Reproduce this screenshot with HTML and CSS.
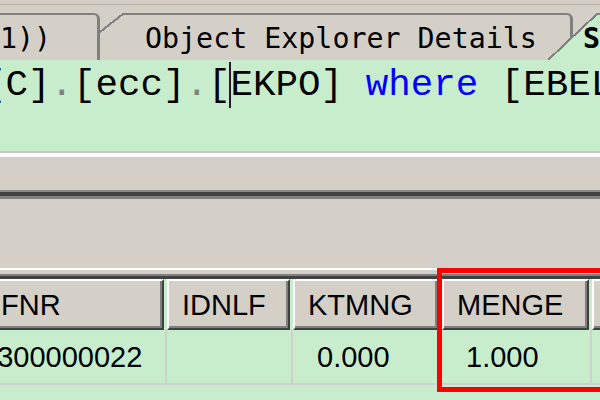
FILE: index.html
```html
<!DOCTYPE html>
<html lang="en">

<head>
    <meta charset="UTF-8">
    <meta name="viewport" content="width=device-width, initial-scale=1.0">
    <title>Query window</title>
    <link rel="stylesheet" href="styles.css">
</head>

<body>
    <div class="window">
        <div class="tabstrip">
            <div class="tab tab-prev">
                <span class="tab-label">d1))</span>
            </div>
            <div class="tab tab-oed">
                <svg class="slant" width="23" height="47" viewBox="0 0 23 47" shape-rendering="crispEdges">
                    <line x1="0" y1="19" x2="23" y2="1" stroke="#808080" stroke-width="2" />
                </svg>
                <div class="tab-body">
                    <span class="tab-label">Object Explorer Details</span>
                </div>
            </div>
            <div class="tab tab-active">
                <svg class="slant" width="49" height="47" viewBox="0 0 49 47" shape-rendering="crispEdges">
                    <polygon points="0,47 49,0 49,47" fill="#c7edcc" />
                    <line x1="0" y1="47" x2="49" y2="1" stroke="#808080" stroke-width="2" />
                </svg>
                <div class="tab-body">
                    <span class="tab-label">SQLQuery1.sql</span>
                </div>
            </div>
        </div>

        <div class="editor">
            <div class="code">[C]<span class="op">.</span>[ecc]<span class="op">.</span>[<span class="caret">EKPO]</span> <span class="kw">where</span> [EBELN] <span class="op">=</span> '4500000022'</div>
        </div>

        <div class="results">
            <div class="pane-top"></div>
            <div class="splitter"></div>
            <div class="pane-bottom"></div>
        </div>

        <div class="grid-frame">
            <div class="grid-wrap">
                <div class="grid">
                    <div class="th">INFNR</div>
                    <div class="th">IDNLF</div>
                    <div class="th">KTMNG</div>
                    <div class="th">MENGE</div>
                    <div class="th">NETPR</div>

                    <div class="td">5300000022</div>
                    <div class="td"></div>
                    <div class="td">0.000</div>
                    <div class="td">1.000</div>
                    <div class="td">0.00</div>
                </div>
            </div>
        </div>

        <div class="callout"></div>
    </div>
</body>

</html>
```

FILE: styles.css
```css
* {
    box-sizing: border-box;
}

html,
body {
    margin: 0;
}

body {
    width: 600px;
    height: 400px;
    overflow: hidden;
    background: #c7edcc;
    font-family: "Liberation Sans", Arial, sans-serif;
}

.window {
    position: relative;
    width: 600px;
    height: 400px;
    overflow: hidden;
    background: #c7edcc;
}

/* tab strip */
.tabstrip {
    display: flex;
    height: 60px;
    padding-top: 13px;
    overflow: hidden;
    white-space: nowrap;
    background: linear-gradient(#d4d0c8 4px, #b4b0a8 4px, #b4b0a8 5px, #d4d0c8 5px);
    font-family: "DejaVu Sans Mono", monospace;
    font-size: 28.3px;
    line-height: 33px;
    color: #000;
}

.tab {
    flex: none;
    display: flex;
    height: 47px;
}

.slant {
    flex: none;
    display: block;
}

.tab-prev {
    width: 100px;
    padding-top: 7px;
    overflow: hidden;
    border-top: 2px solid #808080;
    border-right: 3px solid #808080;
    border-top-right-radius: 6px;
}

.tab-prev .tab-label {
    margin-left: -17px;
}

.tab-body {
    padding-top: 7px;
    border-top: 2px solid #808080;
}

.tab-oed .tab-body {
    width: 450px;
    padding-left: 22px;
    border-right: 3px solid #808080;
    border-top-right-radius: 6px;
}

.tab-active {
    margin-left: -25px;
}

.tab-active .tab-body {
    width: 120px;
    background: #c7edcc;
    font-weight: bold;
}

.tab-active .tab-label {
    margin-left: -14px;
}

/* query editor */
.editor {
    height: 93px;
    background: #c7edcc;
    border-bottom: 2px solid #cac6be;
    overflow: hidden;
}

.code {
    margin-left: -17px;
    padding-top: 4px;
    font-family: "Liberation Mono", "Courier New", monospace;
    font-size: 37.5px;
    line-height: 42px;
    white-space: nowrap;
    color: #000;
}

.op {
    color: #808080;
}

.kw {
    color: #0000ff;
}

.caret {
    margin-left: -2px;
    padding: 2px 0;
    border-left: 2px solid #36103a;
}

/* results pane */
.results {
    border-top: 4px solid #fff;
    background: #d4d0c8;
}

.pane-top {
    height: 33px;
}

.splitter {
    height: 9px;
    background: linear-gradient(#8a8a8a 2px, #404040 2px, #404040 6px, #808080 6px);
}

.pane-bottom {
    height: 69px;
}

.grid-frame {
    padding-top: 4px;
    border-top: 2px solid #fff;
    background: #d4d0c8;
}

.grid-wrap {
    border-top: 2px solid #808080;
}

.grid {
    display: grid;
    grid-template-columns: 210px 126px 149px 150px 120px;
    margin-left: -45px;
    border-top: 3px solid #404040;
    background: #c7edcc;
    font-size: 29px;
    line-height: 34px;
    color: #000;
}

.th {
    height: 51px;
    margin: 0 1px 0 2px;
    padding: 7px 0 0 13px;
    overflow: hidden;
    white-space: nowrap;
    background: #d4d0c8;
    border: 2px solid;
    border-color: #fff #404040 #404040 #fff;
    box-shadow: inset -2px -2px 0 #808080;
}

.td {
    height: 55px;
    padding: 10px 0 0 24px;
    white-space: nowrap;
    border-left: 2px solid #d2d0cc;
    border-bottom: 2px solid #d2d0cc;
}

/* red annotation box */
.callout {
    position: absolute;
    left: 437px;
    top: 268px;
    width: 200px;
    height: 124px;
    border: 5px solid #ff0000;
}
```
